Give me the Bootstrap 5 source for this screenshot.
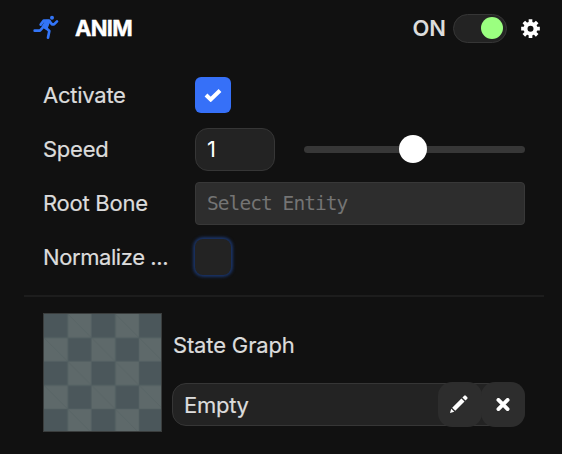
<!DOCTYPE html>
<html lang="en" data-bs-theme="dark">
<head>
<meta charset="utf-8">
<meta name="viewport" content="width=device-width, initial-scale=1">
<title>Anim</title>
<link href="https://cdn.jsdelivr.net/npm/bootstrap@5.3.0/dist/css/bootstrap.min.css" rel="stylesheet">
<style>
body{background:#111;color:#dcdcdc;font-family:Inter,"Liberation Sans",sans-serif;font-size:22px;line-height:30px;overflow:hidden}
.panel{width:562px;height:454px}
.panel-head{height:56px;padding:0 21px 0 32px}
.title{font-weight:700;color:#fff;margin-left:15px;letter-spacing:-.7px;-webkit-text-stroke:.4px #fff}
.state{font-weight:600;margin-right:7px}
.toggle{width:54px;height:29px;border:1px solid #363636;background:#232323;border-radius:15px;padding:0 3px}
.toggle i{width:22px;height:22px;background:#9bff80}
.gear{margin-left:14px}
.props{padding:12px 37px 0 43px}
.prop{height:54px}
.prop-name{width:152px;letter-spacing:-.25px;-webkit-text-stroke:.2px}
.prop-name.tight{letter-spacing:-.42px}
.tick{width:36px;height:36px;border-radius:6px;background:#3670f8}
.tick.off{background:#232323;border-radius:8px;box-shadow:0 0 3px 2px #1a3468}
.num{width:80px;height:43px;border:1px solid #363636;border-radius:13px;background:#232323;color:#fff;padding:0 11px}
.track{width:221px;height:7px;border-radius:4px;background:#373737;margin-left:29px}
.knob{width:28px;height:28px;background:#fff;margin-right:3px}
.entity{height:43px;border:1px solid #383838;border-radius:4px;background:#2d2d2d;color:#747474;padding:0 11px;font:19.5px/41px "DejaVu Sans Mono",monospace;letter-spacing:-.94px}
.rule{height:2px;background:#1d1d1d;margin:11px 18px 0 24px}
.graph{padding:16px 37px 0 43px}
.thumb{width:119px;height:119px;border:1px solid #3a3d3d}
.graph-body{margin-left:10px;padding-top:17px;-webkit-text-stroke:.2px}
.graph-name{padding-left:1px;letter-spacing:-.15px}
.slot{height:43px;border:1px solid #363636;border-radius:14px;background:#232323;margin-top:23px;padding-left:11px;letter-spacing:-.25px}
.tool{width:44px;height:45px;border-radius:14px;background:#2d2d2d;color:#fff}
.tool:last-child{margin-right:-1px;margin-left:-1px}
</style>
</head>
<body>
<main class="panel">
  <header class="panel-head d-flex align-items-center">
    <svg width="28" height="26" viewBox="36 43 84 78" fill="none" stroke="#3375f8" stroke-width="8" stroke-linecap="round" stroke-linejoin="round">
      <circle cx="96" cy="51.5" r="6" fill="#3375f8" stroke="none"/>
      <path d="M62 72 71 60H87L96 71H102L111 62"/>
      <path d="M44 90H60L68 81"/>
      <path d="M76 80 88 91 84 111"/>
      <path d="M78 59H90L80 86 67 78Z" fill="#3375f8" stroke-width="4"/>
    </svg>
    <span class="title">ANIM</span>
    <span class="state ms-auto">ON</span>
    <span class="toggle d-flex align-items-center justify-content-end"><i class="rounded-circle"></i></span>
    <svg class="gear" width="20" height="20" viewBox="-28.5 -32 60 60" fill="none" stroke="#fff">
      <circle r="15" stroke-width="12"/>
      <path stroke-width="11" d="M0-28V-17M0 28V17M-28 0H-17M28 0H17M-20-20-13-13M20-20 13-13M-20 20-13 13M20 20 13 13"/>
    </svg>
  </header>

  <section class="props">
    <div class="prop d-flex align-items-center">
      <span class="prop-name">Activate</span>
      <span class="tick d-flex align-items-center justify-content-center">
        <svg width="18" height="14" viewBox="0 0 18 14"><path d="M2 7 6.7 11.5 16 2.5" fill="none" stroke="#fff" stroke-width="4"/></svg>
      </span>
    </div>
    <div class="prop d-flex align-items-center">
      <span class="prop-name">Speed</span>
      <span class="num d-flex align-items-center">1</span>
      <span class="track d-flex align-items-center justify-content-center"><i class="knob rounded-circle flex-shrink-0"></i></span>
    </div>
    <div class="prop d-flex align-items-center">
      <span class="prop-name">Root Bone</span>
      <span class="entity flex-grow-1">Select Entity</span>
    </div>
    <div class="prop d-flex align-items-center">
      <span class="prop-name tight">Normalize ...</span>
      <span class="tick off"></span>
    </div>
  </section>

  <div class="rule"></div>

  <section class="graph d-flex">
    <svg class="thumb flex-shrink-0" viewBox="0 0 117 117">
      <defs>
        <pattern id="tiles" width="47.6" height="47.6" patternUnits="userSpaceOnUse">
          <rect width="47.6" height="47.6" fill="#4b575b"/>
          <path d="M23.8 0H47.6V23.8H23.8ZM0 23.8H23.8V47.6H0Z" fill="#5e696a"/>
          <path d="M23.8 0 47.6 23.8M0 23.8 23.8 47.6" stroke="#576264" stroke-width=".8"/>
          <path d="M0 23.8H47.6M23.8 0V47.6M0 47.6H47.6M47.6 0V47.6" stroke="#536062" stroke-width="1"/>
        </pattern>
      </defs>
      <rect width="117" height="117" fill="url(#tiles)"/>
    </svg>
    <div class="graph-body flex-grow-1">
      <div class="graph-name">State Graph</div>
      <div class="slot d-flex align-items-center">
        <span class="me-auto">Empty</span>
        <span class="tool d-flex align-items-center justify-content-center flex-shrink-0">
          <svg width="20" height="20" viewBox="1 1 20 20" fill="#fff"><path d="M1 19 2.2 14.7 5.3 17.8ZM3.2 13.7 12.4 4.5 15.5 7.6 6.3 16.8ZM13.4 3.5 15.2 1.7Q16 1 16.8 1.7L18.3 3.2Q19 4 18.3 4.8L16.5 6.6Z"/></svg>
        </span>
        <span class="tool d-flex align-items-center justify-content-center flex-shrink-0">
          <svg width="14" height="14" viewBox="0 .5 14 14"><path d="M2.4 2.4 11.6 11.6M11.6 2.4 2.4 11.6" stroke="#fff" stroke-width="3.8" stroke-linecap="round"/></svg>
        </span>
      </div>
    </div>
  </section>
</main>
<script src="https://cdn.jsdelivr.net/npm/bootstrap@5.3.0/dist/js/bootstrap.bundle.min.js"></script>
</body>
</html>
